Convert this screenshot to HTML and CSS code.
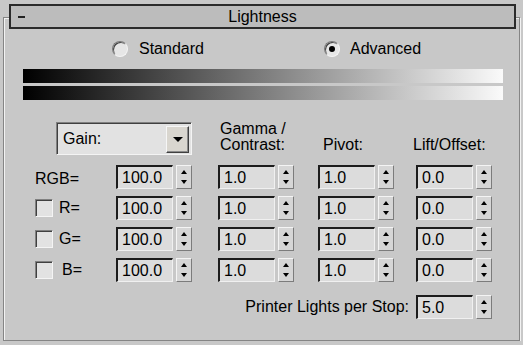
FILE: index.html
```html
<!DOCTYPE html>
<html lang="en">
<head>
    <meta charset="UTF-8">
    <meta name="viewport" content="width=device-width, initial-scale=1.0">
    <title>Lightness</title>
    <link rel="stylesheet" href="styles.css">
</head>
<body>
    <div class="panel">
        <div class="header">
            <span class="collapse"></span>
            <span class="title">Lightness</span>
        </div>
        <div class="modes">
            <div class="opt"><span class="radio"></span>Standard</div>
            <div class="opt"><span class="radio checked"></span>Advanced</div>
        </div>
        <div class="ramp"></div>
        <div class="ramp second"></div>

        <div class="grid">
            <div class="combo"><span class="combo-text">Gain:</span><span class="combo-btn"></span></div>
            <div class="colhead gamma">Gamma /<br>Contrast:</div>
            <div class="colhead pivot">Pivot:</div>
            <div class="colhead lift">Lift/Offset:</div>

            <!-- RGB -->
            <div class="rowlabel rgb">RGB=</div>
            <div class="spin"><span class="field">100.0</span><span class="arrows"></span></div>
            <div class="spin"><span class="field">1.0</span><span class="arrows"></span></div>
            <div class="spin"><span class="field">1.0</span><span class="arrows"></span></div>
            <div class="spin"><span class="field">0.0</span><span class="arrows"></span></div>

            <!-- R -->
            <div class="rowlabel"><span class="check"></span>R=</div>
            <div class="spin"><span class="field">100.0</span><span class="arrows"></span></div>
            <div class="spin"><span class="field">1.0</span><span class="arrows"></span></div>
            <div class="spin"><span class="field">1.0</span><span class="arrows"></span></div>
            <div class="spin"><span class="field">0.0</span><span class="arrows"></span></div>

            <!-- G -->
            <div class="rowlabel"><span class="check"></span>G=</div>
            <div class="spin"><span class="field">100.0</span><span class="arrows"></span></div>
            <div class="spin"><span class="field">1.0</span><span class="arrows"></span></div>
            <div class="spin"><span class="field">1.0</span><span class="arrows"></span></div>
            <div class="spin"><span class="field">0.0</span><span class="arrows"></span></div>

            <!-- B -->
            <div class="rowlabel"><span class="check"></span><span class="b">B=</span></div>
            <div class="spin"><span class="field">100.0</span><span class="arrows"></span></div>
            <div class="spin"><span class="field">1.0</span><span class="arrows"></span></div>
            <div class="spin"><span class="field">1.0</span><span class="arrows"></span></div>
            <div class="spin"><span class="field">0.0</span><span class="arrows"></span></div>

            <div class="printer">Printer Lights per Stop:</div>
            <div class="spin printer-spin"><span class="field">5.0</span><span class="arrows"></span></div>
        </div>
    </div>
</body>
</html>
```

FILE: styles.css
```css
body {
    margin: 0;
    padding: 0;
    background-color: #c8c8c8;
    font-family: "Liberation Sans", Arial, sans-serif;
    font-size: 16px;
    color: #000;
}
.panel {
    margin: 17px 0 0 3px;
    width: 517px;
    height: 324px;
    box-sizing: border-box;
    border: 1px solid #858585;
    box-shadow: inset 1px 1px 0 #f2f2f2, 1px 1px 0 #f2f2f2;
}
.header {
    margin: -14px 0 0 5px;
    width: 507px;
    height: 25px;
    box-sizing: border-box;
    border: 2px solid #2b2b2b;
    background-color: #bcbcbc;
    display: grid;
    grid-template-columns: 1fr auto 1fr;
    align-items: center;
    line-height: 21px;
}
.collapse {
    width: 7px;
    height: 2px;
    margin-left: 7px;
    background-color: #222;
}
.modes {
    display: flex;
    margin-top: 11px;
    padding-left: 108px;
    height: 17px;
    line-height: 17px;
}
.opt {
    display: flex;
    align-items: center;
}
.opt:first-child {
    width: 212px;
}
.radio {
    position: relative;
    width: 16px;
    height: 16px;
    box-sizing: border-box;
    margin-right: 11px;
    border-radius: 50%;
    border: 1px solid;
    border-color: #7a7a7a #f4f4f4 #f4f4f4 #7a7a7a;
    background-color: #e6e6e6;
    box-shadow: inset 1px 1px 0 #404040;
}
.radio.checked {
    margin-right: 10px;
}
.radio.checked::after {
    content: "";
    position: absolute;
    left: 4px;
    top: 4px;
    width: 6px;
    height: 6px;
    border-radius: 50%;
    background-color: #000;
}
.ramp {
    margin: 12px 0 0 19px;
    width: 480px;
    height: 14px;
    background: linear-gradient(to right, #000 0%, #fafafa 100%);
}
.ramp.second {
    margin-top: 3px;
}
.grid {
    display: grid;
    grid-template-columns: 81px 102px 100px 98px 100px;
    grid-template-rows: 37px repeat(4, 24px) 30px;
    row-gap: 7px;
    margin: 21px 0 0 31px;
}
.combo {
    grid-column: 1 / span 2;
    align-self: start;
    margin: 1px 0 0 21px;
    width: 136px;
    height: 33px;
    box-sizing: border-box;
    border: 1px solid;
    border-color: #808080 #f4f4f4 #f4f4f4 #808080;
    box-shadow: inset 1px 1px 0 #404040;
    background-color: #e2e2e2;
    display: flex;
    align-items: center;
    justify-content: space-between;
    padding: 2px 2px 1px 6px;
}
.combo-btn {
    width: 23px;
    height: 27px;
    box-sizing: border-box;
    border: 1px solid;
    border-color: #f6f6f6 #404040 #404040 #f6f6f6;
    box-shadow: inset -1px -1px 0 #8a8a8a;
    background-color: #d9d6cf;
    display: flex;
    align-items: center;
    justify-content: center;
}
.combo-btn::after {
    content: "";
    border-left: 5px solid transparent;
    border-right: 5px solid transparent;
    border-top: 5px solid #000;
}
.colhead {
    align-self: start;
    line-height: 16px;
}
.gamma {
    margin-left: 2px;
}
.pivot {
    padding-top: 16px;
    margin-left: 5px;
}
.lift {
    padding-top: 16px;
    margin-left: -3px;
}
.rowlabel {
    display: flex;
    align-items: center;
    line-height: 24px;
}
.rowlabel.rgb {
    padding-top: 4px;
}
.rowlabel .b {
    margin-left: 3px;
}
.check {
    width: 18px;
    height: 18px;
    box-sizing: border-box;
    margin-right: 6px;
    border: 1px solid;
    border-color: #808080 #f4f4f4 #f4f4f4 #808080;
    box-shadow: inset 1px 1px 0 #404040;
    background-color: #e2e2e2;
}
.spin {
    display: flex;
    gap: 3px;
    height: 24px;
}
.field {
    width: 57px;
    height: 24px;
    box-sizing: border-box;
    border-style: solid;
    border-width: 2px 1px 1px 2px;
    border-color: #1c1c1c #f0f0f0 #f0f0f0 #1c1c1c;
    background-color: #dcdcdc;
    padding-left: 4px;
    line-height: 21px;
}
.arrows {
    position: relative;
    width: 16px;
    height: 24px;
    box-sizing: border-box;
    border: 1px solid;
    border-color: #f4f4f4 #7c7c7c #7c7c7c #f4f4f4;
    background-color: #d6d6d6;
}
.arrows::before,
.arrows::after {
    content: "";
    position: absolute;
    left: 4px;
    border-left: 3px solid transparent;
    border-right: 3px solid transparent;
}
.arrows::before {
    top: 4px;
    border-bottom: 4px solid #000;
}
.arrows::after {
    bottom: 4px;
    border-top: 4px solid #000;
}
.printer {
    grid-column: 1 / span 4;
    justify-self: end;
    align-self: end;
    margin-right: 7px;
    line-height: 24px;
}
.printer-spin {
    align-self: end;
}
```
